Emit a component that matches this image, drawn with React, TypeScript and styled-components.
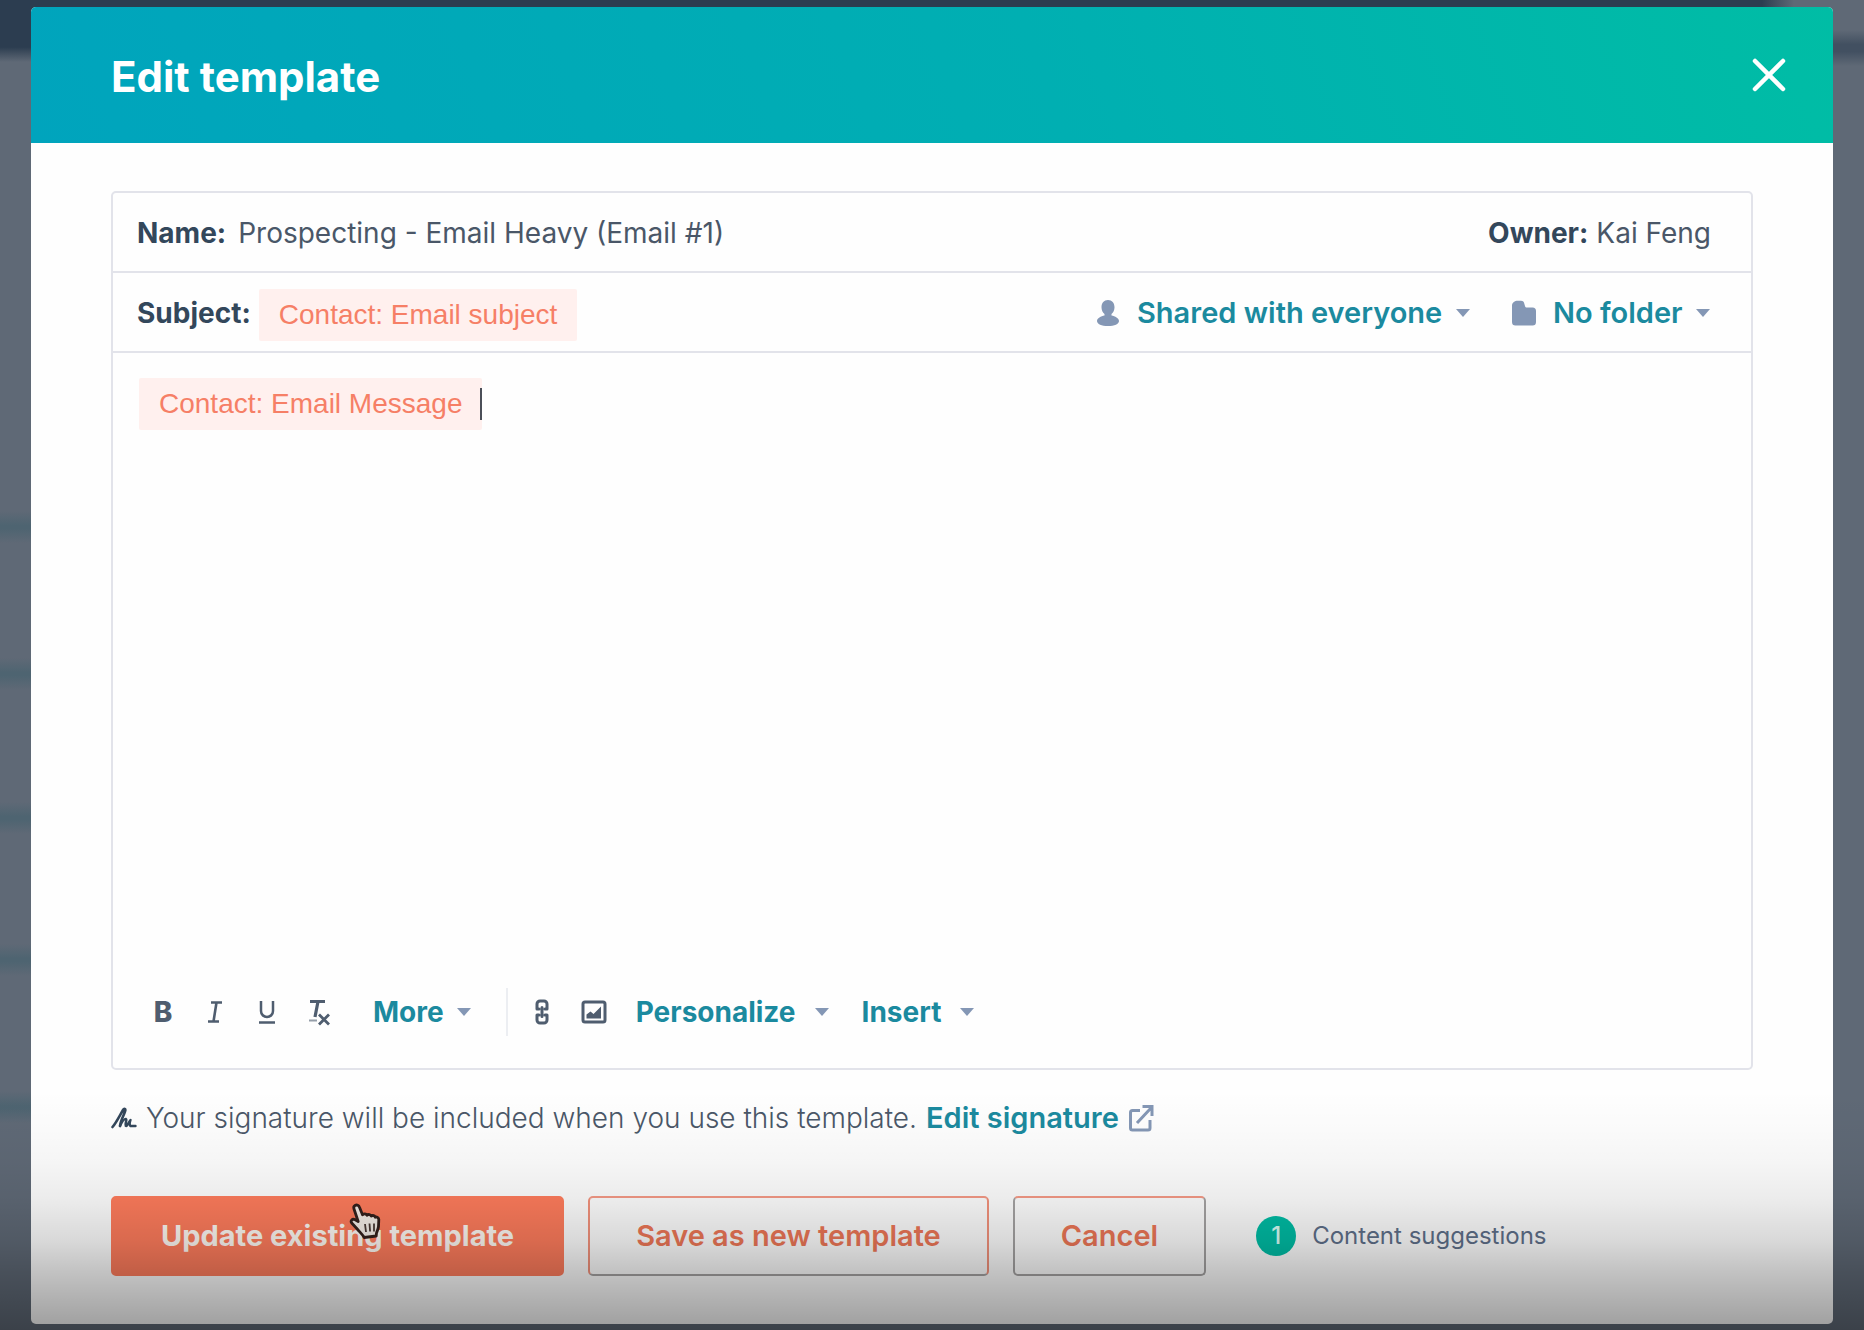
import React from "react";
import styled, { createGlobalStyle, css } from "styled-components";

const ink = "#33475b";
const inkSoft = "#4a5768";
const teal = "#1b8a9f";
const slate = "#8497b5";
const orange = "#ff7c5c";
const line = "#e2e3ea";
const sans = `Inter, "Noto Sans", sans-serif`;

const GlobalStyle = createGlobalStyle`
  *, *::before, *::after { box-sizing: border-box; }
  body { margin: 0; background: #5f6976; }
  button, input, select { font: inherit; color: inherit; }
`;

const stripe = "linear-gradient(#4e647100, #4e6471 45%, #4e6471 55%, #4e647100)";

const Backdrop = styled.div`
  position: relative;
  display: flex;
  min-height: 100vh;
  padding: 7px 31px 6px;
  font-family: ${sans};
  font-size: 28px;
  line-height: 40px;
  color: ${inkSoft};
  background-color: #5f6976;
  background-image: linear-gradient(#42506100, #425061 40%, #425061 60%, #42506100),
    linear-gradient(90deg, #5f697600, #5f6976),
    linear-gradient(#2c3d50 76%, #2c3d5000),
    ${stripe}, ${stripe}, ${stripe}, ${stripe}, ${stripe};
  background-repeat: no-repeat;
  background-size: 31px 36px, 32px 30px, calc(100% - 70px) 62px,
    31px 32px, 31px 32px, 31px 32px, 31px 32px, 31px 32px;
  background-position: right 0 top 30px, right 70px top 0, 0 0,
    0 511px, 0 658px, 0 802px, 0 944px, 0 1091px;
`;

const BottomShade = styled.div`
  position: absolute;
  inset: auto 0 0 0;
  height: 240px;
  pointer-events: none;
  background: linear-gradient(
    rgba(0, 0, 0, 0),
    rgba(0, 0, 0, 0.015) 16%,
    rgba(0, 0, 0, 0.035) 30%,
    rgba(0, 0, 0, 0.07) 45%,
    rgba(0, 0, 0, 0.15) 63%,
    rgba(0, 0, 0, 0.23) 75%,
    rgba(0, 0, 0, 0.31) 88%,
    rgba(0, 0, 0, 0.38)
  );
`;

const Dialog = styled.section`
  flex: 1;
  display: flex;
  flex-direction: column;
  min-width: 0;
  background: #fefefe;
  border-radius: 5px;
  overflow: hidden;
`;

const Header = styled.header`
  display: flex;
  align-items: center;
  justify-content: space-between;
  height: 136px;
  padding: 0 40px 0 80px;
  color: #fff;
  background: linear-gradient(70deg, #00a4bd, #00afb2 56%, #00bda5);
`;

const Title = styled.h1`
  margin: 0;
  padding-top: 4px;
  font-size: 42px;
  line-height: 56px;
  font-weight: 700;
`;

const IconButton = styled.button`
  display: flex;
  align-items: center;
  justify-content: center;
  width: 48px;
  height: 48px;
  padding: 0;
  border: 0;
  background: none;
  cursor: pointer;
`;

const Body = styled.div`
  flex: 1;
  display: flex;
  flex-direction: column;
  padding: 48px 80px;
`;

const Composer = styled.div`
  flex: 1;
  display: flex;
  flex-direction: column;
  border: 2px solid ${line};
  border-radius: 5px;
`;

const Row = styled.div`
  display: flex;
  align-items: center;
  justify-content: space-between;
  gap: 40px;
  height: 80px;
  padding: 2px 40px 0 24px;
  border-bottom: 2px solid ${line};
`;

const Field = styled.div<{ $grow?: boolean }>`
  display: flex;
  align-items: center;
  gap: 8px;
  ${(p) => p.$grow && "flex: 1;"}
`;

const FieldLabel = styled.label`
  font-weight: 700;
  color: ${ink};
`;

const NameInput = styled.input`
  flex: 1;
  min-width: 0;
  height: 40px;
  padding: 0 4px;
  border: 0;
  outline: 0;
  background: none;
`;

const TokenLine = styled.div`
  display: flex;
  align-items: center;
  outline: 0;
`;

const SubjectLine = styled(TokenLine)`
  padding-top: 4px;
`;

const Token = styled.span`
  padding: 0 20px;
  border-radius: 2px;
  font-family: "Liberation Sans", Arial, sans-serif;
  line-height: 52px;
  white-space: pre;
  color: #f67f66;
  background: #fff0ee;
`;

const Cursor = styled.span`
  width: 2px;
  height: 32px;
  margin-left: -2px;
  background: #4b4f58;
`;

const Editor = styled.div`
  flex: 1;
  min-height: 240px;
  padding: 25px 26px;
`;

const Choices = styled.div`
  display: flex;
  align-items: center;
  gap: 40px;
`;

const Choice = styled.label`
  display: flex;
  align-items: center;
  gap: 12px;
  color: ${teal};
`;

const ChoiceIcon = styled.svg`
  width: 26px;
  height: 26px;
  margin-right: 4px;
  fill: ${slate};
`;

const accentText = css`
  font-size: 29px;
  font-weight: 600;
`;

const Select = styled.select`
  appearance: none;
  height: 40px;
  padding: 0;
  border: 0;
  background: none;
  cursor: pointer;
  ${accentText}
`;

const Toolbar = styled.div`
  display: flex;
  align-items: center;
  padding: 0 24px 32px;
  color: #4f5d6f;
`;

const ToolGroup = styled.div`
  display: flex;
`;

const Tool = styled(IconButton)`
  width: 52px;
  font-weight: 800;
`;

const MenuButton = styled.button<{ $gap: number }>`
  display: flex;
  align-items: center;
  gap: ${(p) => p.$gap}px;
  height: 48px;
  padding: 0;
  border: 0;
  background: none;
  font-weight: 700;
  color: ${teal};
  cursor: pointer;
`;

const Menus = styled.div<{ $start: number }>`
  display: flex;
  gap: 32px;
  margin-left: ${(p) => p.$start}px;
`;

const Divider = styled.span`
  width: 2px;
  height: 48px;
  margin: 0 8px 0 34px;
  background: #eceef2;
`;

const Signature = styled.p`
  display: flex;
  align-items: center;
  gap: 9px;
  margin: 28px 0 58px;
  font-weight: 350;
`;

const SignatureLink = styled.a`
  display: flex;
  align-items: center;
  gap: 9px;
  color: ${teal};
  text-decoration: none;
  ${accentText}
`;

const Footer = styled.footer`
  display: flex;
  align-items: center;
  gap: 24px;
`;

const Action = styled.button<{ $tone: "solid" | "outline" | "quiet" }>`
  position: relative;
  height: 80px;
  padding: 0 46px;
  border: 2px solid ${orange};
  border-radius: 5px;
  white-space: nowrap;
  cursor: pointer;
  ${accentText}
  ${(p) =>
    p.$tone === "solid"
      ? "background: #ff7c5c; color: #fffaf4; font-weight: 700; padding: 0 48px;"
      : "background: none; color: #ee7757;"}
  ${(p) => p.$tone === "outline" && "border-color: #f59a86 #f3927c #a5a3a3;"}
  ${(p) => p.$tone === "quiet" && "border-color: #f59a86 #a5a3a3 #a5a3a3;"}
`;

const Pointer = styled.svg`
  position: absolute;
  left: 234px;
  top: 4px;
`;

const Suggestions = styled.div`
  display: flex;
  align-items: center;
  gap: 16px;
  margin-left: 26px;
  font-size: 24px;
  color: #5f708a;
`;

const Count = styled.span`
  width: 40px;
  height: 40px;
  border-radius: 50%;
  text-align: center;
  font-weight: 500;
  color: #d9fff6;
  background: #00bda5;
`;

const Caret = () => (
  <svg width="16" height="10" viewBox="0 0 16 10" aria-hidden="true">
    <path d="M1 1h14L8 9z" fill={slate} />
  </svg>
);

export default function App() {
  return (
    <Backdrop>
      <GlobalStyle />
      <Dialog role="dialog" aria-labelledby="dialog-title">
        <Header>
          <Title id="dialog-title">Edit template</Title>
          <IconButton type="button" aria-label="Close">
            <svg width="34" height="34" viewBox="0 0 34 34" stroke="#fff" strokeWidth="4.500" strokeLinecap="round">
              <path d="M3 3l28 28M31 3L3 31" />
            </svg>
          </IconButton>
        </Header>
        <Body>
          <Composer>
            <Row>
              <Field $grow>
                <FieldLabel htmlFor="name">Name:</FieldLabel>
                <NameInput id="name" defaultValue="Prospecting - Email Heavy (Email #1)" />
              </Field>
              <Field>
                <FieldLabel as="strong">Owner:</FieldLabel>
                <span>Kai Feng</span>
              </Field>
            </Row>
            <Row>
              <Field>
                <FieldLabel as="strong" id="subject">Subject:</FieldLabel>
                <SubjectLine role="textbox" aria-labelledby="subject">
                  <Token>Contact: Email subject</Token>
                </SubjectLine>
              </Field>
              <Choices>
                <Choice>
                  <ChoiceIcon viewBox="0 0 26 26" aria-hidden="true">
                    <path d="M13 0c4 0 6.500 3 6.500 7.200 0 2.800-1.200 5.300-3 6.800v1.500c3.500.8 7.500 2.500 7.500 5.500 0 3-4.500 5-11 5S2 24 2 21c0-3 4-4.700 7.500-5.500V14c-1.800-1.500-3-4-3-6.800C6.500 3 9 0 13 0z" />
                  </ChoiceIcon>
                  <Select aria-label="Sharing">
                    <option>Shared with everyone</option>
                  </Select>
                  <Caret />
                </Choice>
                <Choice>
                  <ChoiceIcon viewBox="0 0 26 26" aria-hidden="true">
                    <path d="M1 5.500V22a3.500 3.500 0 0 0 3.500 3.500h17A3.500 3.500 0 0 0 25 22V11a3.500 3.500 0 0 0-3.500-3.500H16c-1 0-1.800-.5-2-1.500l-.6-2C13 2 12 .8 10 .8H6.500C4 .8 1 2.500 1 5.500z" />
                  </ChoiceIcon>
                  <Select aria-label="Folder">
                    <option>No folder</option>
                  </Select>
                  <Caret />
                </Choice>
              </Choices>
            </Row>
            <Editor>
              <TokenLine role="textbox" aria-multiline="true" aria-label="Message">
                <Token>Contact: Email Message</Token>
                <Cursor />
              </TokenLine>
            </Editor>
            <Toolbar role="toolbar" aria-label="Formatting">
              <ToolGroup>
                <Tool type="button" aria-label="Bold">B</Tool>
                <Tool type="button" aria-label="Italic">
                  <svg width="16" height="24" viewBox="0 0 16 24" stroke="currentColor" strokeWidth="2.600" fill="none">
                    <path d="M4 2.500h11M1 21.500h11M9.500 2.500L6.500 21.500" />
                  </svg>
                </Tool>
                <Tool type="button" aria-label="Underline">
                  <svg width="18" height="24" viewBox="0 0 18 24" stroke="currentColor" strokeWidth="2.500" fill="none">
                    <path d="M3 1v10a6 6 0 0 0 12 0V1M1 22.500h16" />
                  </svg>
                </Tool>
                <Tool type="button" aria-label="Clear formatting">
                  <svg width="24" height="28" viewBox="0 0 24 28" stroke="currentColor" fill="none">
                    <path d="M3 3.500h15M11 3.500L8 19" strokeWidth="3.200" />
                    <path d="M2 22.500h8" strokeWidth="2" opacity="0.600" />
                    <path d="M12 16.500l10 10M22 16.500l-10 10" strokeWidth="2.800" />
                  </svg>
                </Tool>
              </ToolGroup>
              <Menus $start={28}>
                <MenuButton type="button" aria-haspopup="menu" $gap={12}>
                  More
                  <Caret />
                </MenuButton>
              </Menus>
              <Divider />
              <ToolGroup>
                <Tool type="button" aria-label="Insert link">
                  <svg width="14" height="26" viewBox="0 0 14 26" stroke="currentColor" strokeWidth="3" fill="none" strokeLinecap="round">
                    <path d="M2 10V5a3 3 0 0 1 3-3h4a3 3 0 0 1 3 3v5M2 16v5a3 3 0 0 0 3 3h4a3 3 0 0 0 3-3v-5M7 8.500v9M2 10h2M10 10h2M2 16h2M10 16h2" />
                  </svg>
                </Tool>
                <Tool type="button" aria-label="Insert image">
                  <svg width="26" height="24" viewBox="0 0 26 24" fill="none">
                    <rect x="2" y="2" width="22" height="20" rx="2" stroke="currentColor" strokeWidth="3" />
                    <path d="M5.500 18.500v-4l4-3 3 2.500 7.500-7.500v12z" fill="currentColor" />
                  </svg>
                </Tool>
              </ToolGroup>
              <Menus $start={16}>
                <MenuButton type="button" aria-haspopup="menu" $gap={18}>
                  Personalize
                  <Caret />
                </MenuButton>
                <MenuButton type="button" aria-haspopup="menu" $gap={18}>
                  Insert
                  <Caret />
                </MenuButton>
              </Menus>
            </Toolbar>
          </Composer>
          <Signature>
            <svg width="26" height="22" viewBox="0 0 26 22" stroke={ink} fill="none" strokeLinecap="round" strokeLinejoin="round" aria-hidden="true">
              <path d="M1.500 20C5 16 9 8 12 3c1.500-2.200 3-.7 2 1.500C12.500 9 9.500 14 9 19" strokeWidth="2.600" />
              <path d="M9 19c2-4 4.500-7.500 6-7 1.500.6-1.500 5-.3 6.800 1.300 1 3.300-4 4.800-5.800-.8 2.500-1.200 5 0 6h5" strokeWidth="2.400" />
            </svg>
            <span>Your signature will be included when you use this template.</span>
            <SignatureLink href="#signature">
              Edit signature
              <svg width="26" height="28" viewBox="0 0 26 28" stroke={slate} strokeWidth="3" fill="none" aria-hidden="true">
                <path d="M12 6.500H4.500a2 2 0 0 0-2 2V24a2 2 0 0 0 2 2H20a2 2 0 0 0 2-2v-8" />
                <path d="M9 19L23 4M14.500 2.500H24V12" />
              </svg>
            </SignatureLink>
          </Signature>
          <Footer>
            <Action type="button" $tone="solid">
              Update existing template
              <Pointer width="36" height="38" viewBox="0 0 36 38" aria-hidden="true">
                <path
                  d="M8 3.500c2-1.200 3.800-.2 4.500 1.800l3 7.500c1.500-1.500 3.500-1.200 4.500.4 1.500-1.200 3.500-.8 4.300.8 1.500-1 3.300-.4 4 1.200 1.500-.6 3.300.3 3.500 2.300l-.3 7c-.3 3-1.500 4.500-2 6.500l-.3 3-12 1.500c-1.500-3-4.500-5.500-7-8.500l-5.500-6c-1.500-2 .5-4.500 3-3.500l3.500 2L7 7c-.5-1.500-.2-2.800 1-3.500z"
                  fill="#f6efe9"
                  stroke="#33201c"
                  strokeWidth="2.800"
                  strokeLinejoin="round"
                />
                <path d="M18 22l1 8M22.500 21.500l.6 8M27 21.500v8" stroke="#4a3a36" strokeWidth="1.800" />
              </Pointer>
            </Action>
            <Action type="button" $tone="outline">Save as new template</Action>
            <Action type="button" $tone="quiet">Cancel</Action>
            <Suggestions>
              <Count>1</Count>
              <span>Content suggestions</span>
            </Suggestions>
          </Footer>
        </Body>
      </Dialog>
      <BottomShade />
    </Backdrop>
  );
}
